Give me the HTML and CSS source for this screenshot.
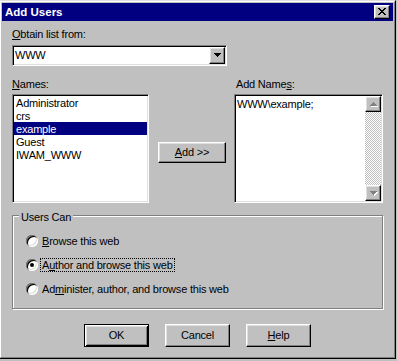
FILE: index.html
```html
<!DOCTYPE html>
<html>
<head>
<meta charset="utf-8">
<title>Add Users</title>
<link rel="stylesheet" href="styles.css">
</head>
<body>
<div class="window">
  <div class="frame">
    <div class="titlebar">
      <span class="title">Add Users</span>
      <div class="close raised">
        <svg width="8" height="7" viewBox="0 0 8 7"><path fill="#000" d="M0 0h2v1H0zM6 0h2v1H6zM1 1h2v1H1zM5 1h2v1H5zM2 2h4v1H2zM3 3h2v1H3zM2 4h4v1H2zM1 5h2v1H1zM5 5h2v1H5zM0 6h2v1H0zM6 6h2v1H6z"/></svg>
      </div>
    </div>
    <div class="client">
      <div class="label"><u>O</u>btain list from:</div>
      <div class="combo sunken">
        <div class="combo-text">WWW</div>
        <div class="drop-btn raised">
          <svg width="7" height="4" viewBox="0 0 7 4"><path fill="#000" d="M0 0h7v1H0zM1 1h5v1H1zM2 2h3v1H2zM3 3h1v1H3z"/></svg>
        </div>
      </div>
      <div class="names">
        <div class="label"><u>N</u>ames:</div>
        <div class="label label-add">Add Name<u>s</u>:</div>
        <div class="listbox sunken">
          <div class="item">Administrator</div>
          <div class="item">crs</div>
          <div class="item selected">example</div>
          <div class="item">Guest</div>
          <div class="item">IWAM_WWW</div>
        </div>
        <div class="btn raised btn-add"><span><u>A</u>dd &gt;&gt;</span></div>
        <div class="textbox sunken">
          <div class="textbox-text">WWW\example;</div>
          <div class="scrollbar">
            <div class="sb-btn raised">
              <svg width="8" height="5" viewBox="0 0 8 5"><path fill="#fff" d="M4 1h1v1H4zM3 2h3v1H3zM2 3h5v1H2zM1 4h7v1H1z"/><path fill="#808080" d="M3 0h1v1H3zM2 1h3v1H2zM1 2h5v1H1zM0 3h7v1H0z"/></svg>
            </div>
            <div class="sb-track"></div>
            <div class="sb-btn raised">
              <svg width="8" height="5" viewBox="0 0 8 5"><path fill="#fff" d="M1 1h7v1H1zM2 2h5v1H2zM3 3h3v1H3zM4 4h1v1H4z"/><path fill="#808080" d="M0 0h7v1H0zM1 1h5v1H1zM2 2h3v1H2zM3 3h1v1H3z"/></svg>
            </div>
          </div>
        </div>
      </div>
      <div class="group">
        <div class="group-title">Users Can</div>
        <div class="radio-row"><span class="radio"></span><span class="radio-label"><u>B</u>rowse this web</span></div>
        <div class="radio-row"><span class="radio checked"></span><span class="radio-label focus">A<u>u</u>thor and browse this web</span></div>
        <div class="radio-row"><span class="radio"></span><span class="radio-label">Ad<u>m</u>inister, author, and browse this web</span></div>
      </div>
      <div class="buttons">
        <div class="btn btn-default"><span>OK</span></div>
        <div class="btn raised"><span>Cancel</span></div>
        <div class="btn raised"><span><u>H</u>elp</span></div>
      </div>
    </div>
  </div>
</div>
</body>
</html>
```

FILE: styles.css
```css
* { box-sizing: border-box; }
html, body { margin: 0; padding: 0; }
body {
  width: 397px;
  height: 361px;
  overflow: hidden;
  background: #c0c0c0;
  font-family: "Liberation Sans", Arial, sans-serif;
  font-size: 11px;
  letter-spacing: -0.2px;
  color: #000;
}
svg { display: block; }
u { text-decoration: underline; text-underline-offset: 1px; }

.window {
  width: 397px;
  height: 359px;
  margin-left: -1px;
  border: 1px solid;
  border-color: #dfdfdf #000 #000 #dfdfdf;
  background: #c0c0c0;
}
.frame {
  height: 100%;
  border: 1px solid;
  border-color: #fff #808080 #808080 #fff;
  padding: 1px;
}

.titlebar {
  height: 18px;
  background: #000080;
  display: flex;
  align-items: center;
  justify-content: space-between;
  padding: 0 3px;
}
.title {
  color: #fff;
  font-weight: bold;
  font-size: 11.5px;
  line-height: 18px;
  letter-spacing: 0;
}
.close {
  width: 16px;
  height: 14px;
  padding: 2px 0 0 3px;
}

.raised {
  border: 1px solid;
  border-color: #fff #000 #000 #fff;
  box-shadow: inset -1px -1px #808080, inset 1px 1px #dfdfdf;
  background: #c0c0c0;
}
.sunken {
  border: 1px solid;
  border-color: #808080 #fff #fff #808080;
  box-shadow: inset 1px 1px #000, inset -1px -1px #dfdfdf;
  padding: 1px;
  background: #fff;
}

.client {
  padding: 7px 10px 0 10px;
}
.label { line-height: 13px; white-space: nowrap; }

.combo {
  width: 215px;
  height: 21px;
  margin-top: 4px;
  display: flex;
}
.combo-text {
  flex: 1;
  padding-left: 1px;
  line-height: 17px;
}
.drop-btn {
  width: 16px;
  height: 17px;
  padding: 5px 0 0 4px;
}

.names {
  margin-top: 12px;
  display: grid;
  grid-template-columns: 137px 85px 149px;
  grid-template-rows: 13px 109px;
  row-gap: 3px;
}
.label-add { grid-column: 3; padding-left: 2px; }
.listbox { overflow: hidden; }
.item {
  height: 13px;
  line-height: 12px;
  padding: 1px 0 0 2px;
  white-space: nowrap;
}
.item.selected { background: #000080; color: #fff; }

.btn {
  display: flex;
  align-items: center;
  justify-content: center;
  line-height: 13px;
  white-space: nowrap;
}
.btn-add {
  justify-self: start;
  align-self: start;
  width: 68px;
  height: 21px;
  margin: 48px 0 0 9px;
}

.textbox { display: flex; }
.textbox-text {
  flex: 1;
  padding: 2px 0 0 1px;
  line-height: 13px;
}
.scrollbar {
  width: 16px;
  display: flex;
  flex-direction: column;
}
.sb-btn {
  width: 16px;
  height: 16px;
  flex: none;
  padding: 5px 0 0 4px;
}
.sb-track {
  flex: 1;
  background: repeating-conic-gradient(#c0c0c0 0 25%, #fff 0 50%) 0 0 / 2px 2px;
}

.group {
  margin-top: 12px;
  height: 94px;
  border: 1px solid #808080;
  box-shadow: inset 1px 1px #fff, 1px 1px #fff;
  padding: 0 0 7px 13px;
}
.group-title {
  width: max-content;
  margin: -5px 0 5px -7px;
  padding: 0 2px;
  background: #c0c0c0;
  line-height: 13px;
}
.radio-row {
  height: 24px;
  display: flex;
  align-items: center;
}
.radio {
  flex: none;
  width: 12px;
  height: 12px;
  border-radius: 50%;
  background: #fff;
  box-shadow: inset 1px 1px #808080, inset -1px -1px #fff, inset 2px 2px #000, inset -2px -2px #dfdfdf;
  display: flex;
  align-items: center;
  justify-content: center;
}
.radio.checked::after {
  content: "";
  width: 4px;
  height: 4px;
  border-radius: 50%;
  background: #000;
}
.radio-label {
  margin-left: 2px;
  padding: 0 1px;
  border: 1px solid transparent;
  line-height: 12px;
  white-space: nowrap;
}
.radio-label.focus { border: 1px dotted #000; }

.buttons {
  margin-top: 15px;
  display: flex;
  justify-content: center;
  gap: 16px;
}
.buttons .btn { width: 65px; height: 23px; }
.btn-default {
  border: 1px solid #000;
  background: #c0c0c0;
  box-shadow: inset 1px 1px #fff, inset -1px -1px #000, inset 2px 2px #dfdfdf, inset -2px -2px #808080;
}
```
